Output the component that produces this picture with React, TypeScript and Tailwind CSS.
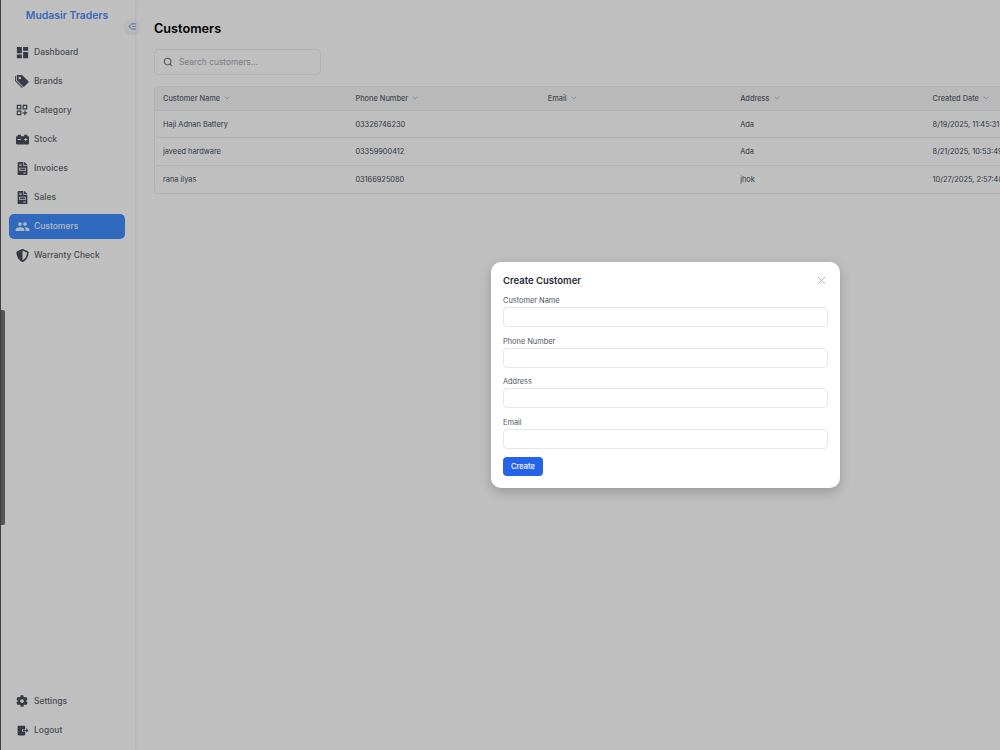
import React from 'react';
import { X, Search, ChevronDown } from 'lucide-react';
import { MdDashboard, MdOutlineDashboardCustomize, MdPeople } from 'react-icons/md';
import { FaCarBattery, FaFileInvoice, FaCog, FaShieldAlt } from 'react-icons/fa';
import { BsTagsFill } from 'react-icons/bs';

const nav = [
  { label: 'Dashboard', icon: <MdDashboard size={15} /> },
  { label: 'Brands', icon: <BsTagsFill size={14} /> },
  { label: 'Category', icon: <MdOutlineDashboardCustomize size={14} /> },
  { label: 'Stock', icon: <FaCarBattery size={13} /> },
  { label: 'Invoices', icon: <FaFileInvoice size={13} /> },
  { label: 'Sales', icon: <FaFileInvoice size={13} /> },
  { label: 'Customers', icon: <MdPeople size={15} />, active: true },
  { label: 'Warranty Check', icon: <FaShieldAlt size={13} /> },
];

const columns = ['Customer Name', 'Phone Number', 'Email', 'Address', 'Created Date'];

const rows = [
  ['Haji Adnan Battery', '03326746230', '', 'Ada', '8/19/2025, 11:45:31 AM'],
  ['javeed hardware', '03359900412', '', 'Ada', '8/21/2025, 10:53:49 AM'],
  ['rana ilyas', '03166925080', '', 'jhok', '10/27/2025, 2:57:48 PM'],
];

const fields = ['Customer Name', 'Phone Number', 'Address', 'Email'];

function LogoutIcon() {
  return (
    <svg width="13" height="13" viewBox="0 0 24 24" fill="currentColor">
      <path d="M3 5a2 2 0 0 1 2-2h10a2 2 0 0 1 2 2v5h-6v4h6v5a2 2 0 0 1-2 2H5a2 2 0 0 1-2-2z" />
      <path d="M13 11h6V8l4 4-4 4v-3h-6z" />
    </svg>
  );
}

function NavItem({ label, icon, active }: { label: string; icon: React.ReactNode; active?: boolean }) {
  return (
    <div className={`flex h-[25px] items-center rounded-[5px] pl-[4px] text-[8.5px] font-medium ${active ? 'bg-[#3f8eff] text-[#f0f5ff]' : 'text-[#626873]'}`}>
      <span className={`flex w-[18px] shrink-0 justify-center ${active ? 'text-[#f0f5ff]' : 'text-[#474e5c]'}`}>{icon}</span>
      <span className="ml-[3px]">{label}</span>
    </div>
  );
}

export default function App() {
  return (
    <div className="relative flex h-[750px] w-[1000px] overflow-hidden bg-white font-['Inter',sans-serif]">
      <aside className="relative z-10 flex w-[135px] shrink-0 flex-col border-l-[1px] border-l-[#555555] bg-white shadow-[1px_0_3px_rgba(0,0,0,0.06)]">
        <div className="pt-[9px] pr-[2px] text-center text-[10.4px] leading-[14px] font-semibold text-[#4f8ef5]">Mudasir Traders</div>
        <div className="mt-[16.5px] flex flex-col gap-[4px] pr-[10px] pl-[8px]">
          {nav.map((n) => (
            <NavItem key={n.label} {...n} />
          ))}
        </div>
        <div className="mt-auto flex flex-col gap-[4px] pr-[10px] pb-[7.5px] pl-[8px]">
          <NavItem label="Settings" icon={<FaCog size={12} />} />
          <NavItem label="Logout" icon={<LogoutIcon />} />
        </div>
      </aside>

      <main className="min-w-0 flex-1 overflow-hidden pt-[20px] pl-[19px]">
        <h1 className="text-[12.7px] leading-[17px] font-semibold text-black">Customers</h1>
        <div className="mt-[12px] flex h-[26px] w-[167px] items-center rounded-[4px] border border-[#eceef1] pl-[8px]">
          <Search size={10} strokeWidth={2.5} className="text-[#6b7280]" />
          <span className="ml-[6px] text-[8.4px] text-[#a3a9b3]">Search customers...</span>
        </div>
        <div className="mt-[11px] w-[964px] rounded-[4px] border border-[#eceef1]">
          <table className="w-full table-fixed border-collapse text-left">
            <thead>
              <tr className="h-[23px] bg-[#f7f7f7]">
                {columns.map((c) => (
                  <th key={c} className="pl-[8px] text-[7.4px] font-medium text-[#5b6472]">
                    <span className="flex items-center gap-[3px]">
                      {c}
                      <ChevronDown size={8} className="text-[#9ca3af]" />
                    </span>
                  </th>
                ))}
              </tr>
            </thead>
            <tbody>
              {rows.map((r) => (
                <tr key={r[0]} className="h-[27.5px] border-t border-[#eceef1]">
                  {r.map((v, i) => (
                    <td key={i} className="overflow-hidden pt-[1px] pl-[8px] text-[7.4px] whitespace-nowrap text-[#414a59]">{v}</td>
                  ))}
                </tr>
              ))}
            </tbody>
          </table>
        </div>
      </main>

      {/* overlay */}
      <div className="absolute inset-0 z-20 bg-black/25" />
      <div className="absolute top-[262px] left-[491px] z-30 h-[226px] w-[349px] rounded-[10px] bg-white px-[12px] pt-[12px] shadow-[0_4px_12px_rgba(0,0,0,0.2)]">
        <div className="flex items-center justify-between">
          <div className="text-[9.5px] leading-[13px] font-semibold text-[#1f2937]">Create Customer</div>
          <X size={13} strokeWidth={1.5} className="text-[#9ca3af]" />
        </div>
        <div className="mt-[8px] flex flex-col gap-[8.6px]">
          {fields.map((f) => (
            <div key={f}>
              <div className="text-[7.4px] leading-[12px] text-[#4b5563]">{f}</div>
              <div className="h-[20px] rounded-[4px] border border-[#e5e7eb] bg-white" />
            </div>
          ))}
        </div>
        <button className="mt-[8px] h-[19px] w-[40px] rounded-[4px] bg-[#2563eb] text-[7.5px] font-medium text-white">Create</button>
      </div>

      {/* scrollbar thumb & sidebar toggle */}
      <div className="absolute top-[310px] left-[1px] z-30 h-[215px] w-[4px] rounded-r-[2px] bg-[#555555]" />
      <div className="absolute top-[19px] left-[125px] z-10 flex h-[14px] w-[14px] items-center justify-center rounded-full bg-[#f6f7f9] shadow-[0_1px_3px_rgba(0,0,0,0.12)]">
        <svg width="9" height="9" viewBox="0 0 24 24" fill="none" stroke="#8aa9e0" strokeWidth="3" strokeLinecap="round" strokeLinejoin="round">
          <path d="M10 5H21M12 12H21M10 19H21" />
          <path d="M7 8L3 12L7 16" />
        </svg>
      </div>
    </div>
  );
}
